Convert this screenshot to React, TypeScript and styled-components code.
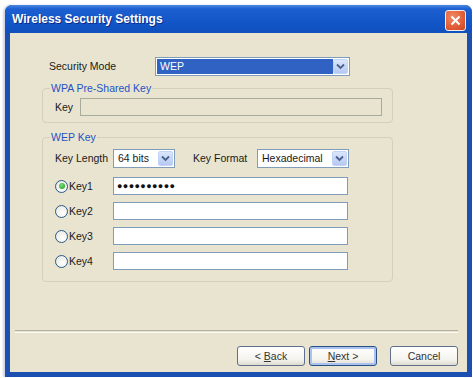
import styled, { createGlobalStyle } from 'styled-components';

const GlobalStyle = createGlobalStyle`
  body {
    margin: 0;
    background: #ffffff;
    font-family: 'Liberation Sans', Arial, sans-serif;
  }
`;

const Window = styled.div`
  margin: 5px 0 0 5px;
  width: 467px;
  height: 372px;
  display: flex;
  flex-direction: column;
  border-radius: 7px 7px 0 0;
  background: #1b4fb0;
  box-shadow: -2px 0 2px rgba(120, 130, 170, 0.35);
`;

const TitleBar = styled.div`
  height: 28px;
  display: flex;
  align-items: center;
  justify-content: space-between;
  padding: 0 6px 0 7px;
  border-radius: 7px 7px 0 0;
  background: linear-gradient(#4b87e4 0%, #1d5fd0 14%, #1256c8 60%, #1150bd 100%);
`;

const Title = styled.span`
  color: #ffffff;
  font-size: 12px;
  font-weight: bold;
  text-shadow: 1px 1px 0 #0b2a8a;
`;

const CloseButton = styled.div`
  width: 19px;
  height: 19px;
  margin-top: 2px;
  border: 1px solid #f4f0ee;
  border-radius: 3px;
  display: flex;
  align-items: center;
  justify-content: center;
  background: radial-gradient(circle at 35% 30%, #f08a66 0%, #e2603a 55%, #cc4522 100%);
`;

const Content = styled.div`
  flex: 1;
  margin: 0 5px 5px 5px;
  background: #e8e4cf;
  display: flex;
  flex-direction: column;
  font-size: 10.5px;
  color: #1a1a1a;
`;

const Body = styled.div`
  padding: 24px 0 0 32px;
  display: flex;
  flex-direction: column;
`;

const Row = styled.div<{ $indent?: number }>`
  display: flex;
  align-items: center;
  height: 18px;
  padding-left: ${({ $indent }) => $indent ?? 0}px;
`;

const Label = styled.span<{ $width?: number; $gap?: number }>`
  width: ${({ $width }) => ($width ? `${$width}px` : 'auto')};
  margin-left: ${({ $gap }) => $gap ?? 0}px;
  white-space: nowrap;
`;

const Group = styled.fieldset<{ $top: number; $pad: string }>`
  box-sizing: border-box;
  width: 351px;
  margin: ${({ $top }) => $top}px 0 0 0;
  padding: ${({ $pad }) => $pad};
  border: 1px solid #d3cfba;
  border-radius: 4px;
  display: flex;
  flex-direction: column;
  gap: 7px;
`;

const Legend = styled.legend`
  color: #2553c6;
  padding: 0 1px;
  margin-left: -5px;
  font-size: 10.5px;
`;

const TextBox = styled.div<{ $width: number; $disabled?: boolean }>`
  box-sizing: border-box;
  width: ${({ $width }) => $width}px;
  height: 18px;
  border: 1px solid ${({ $disabled }) => ($disabled ? '#a7ab9c' : '#7f9db9')};
  background: ${({ $disabled }) => ($disabled ? '#e8e4cf' : '#ffffff')};
  display: flex;
  align-items: center;
  padding-left: 3px;
  font-size: 9px;
  letter-spacing: 0.4px;
  color: #111;
`;

const SelectBox = styled.div<{ $width: number }>`
  box-sizing: border-box;
  width: ${({ $width }) => $width}px;
  height: 19px;
  border: 1px solid #7f9db9;
  background: #ffffff;
  display: flex;
  padding: 1px;
`;

const SelectValue = styled.span<{ $active?: boolean }>`
  flex: 1;
  display: flex;
  align-items: center;
  padding-left: 3px;
  background: ${({ $active }) => ($active ? '#2f62c2' : 'transparent')};
  color: ${({ $active }) => ($active ? '#ffffff' : '#1a1a1a')};
`;

const DropButton = styled.span`
  width: 15px;
  display: flex;
  align-items: center;
  justify-content: center;
  border-radius: 2px;
  background: linear-gradient(#dbe6fb, #b5c9f3);
  border: 1px solid #c3d3f6;
  box-sizing: border-box;
`;

const Radio = styled.span<{ $checked?: boolean }>`
  box-sizing: border-box;
  width: 13px;
  height: 13px;
  margin-right: 1px;
  border-radius: 50%;
  border: 1px solid #2a5b86;
  background: radial-gradient(circle at 60% 65%, #ffffff 0%, #e4e3dc 100%);
  display: flex;
  align-items: center;
  justify-content: center;

  &::after {
    content: '';
    display: ${({ $checked }) => ($checked ? 'block' : 'none')};
    width: 6px;
    height: 6px;
    border-radius: 50%;
    background: radial-gradient(circle at 40% 35%, #7be07b 0%, #2aa52a 80%);
  }
`;

const Footer = styled.div`
  margin-top: auto;
  display: flex;
  flex-direction: column;
`;

const Separator = styled.div`
  margin: 0 9px 0 5px;
  height: 1px;
  border-top: 1px solid #b4b09e;
  border-bottom: 1px solid #fbfaf4;
`;

const ButtonRow = styled.div`
  display: flex;
  justify-content: flex-end;
  gap: 4px;
  padding: 13px 9px 6px 0;
`;

const Button = styled.div<{ $focused?: boolean; $space?: number }>`
  box-sizing: border-box;
  width: 68px;
  height: 20px;
  margin-left: ${({ $space }) => $space ?? 0}px;
  border: 1px solid ${({ $focused }) => ($focused ? '#2b4f86' : '#5f708e')};
  border-radius: 3px;
  background: linear-gradient(#ffffff 0%, #f4f3ee 70%, #dedbcf 100%);
  box-shadow: ${({ $focused }) => ($focused ? 'inset 0 0 0 2px #a9c2ee' : 'none')};
  display: flex;
  align-items: center;
  justify-content: center;
  color: #333;
  font-size: 10.5px;
  white-space: pre;
`;

const Chevron = () => (
  <svg width="9" height="7" viewBox="0 0 9 7">
    <path d="M1 1.5 L4.5 5 L8 1.5" fill="none" stroke="#4a5f8c" strokeWidth="1.8" />
  </svg>
);

const Select = ({ value, width, active }: { value: string; width: number; active?: boolean }) => (
  <SelectBox $width={width}>
    <SelectValue $active={active}>{value}</SelectValue>
    <DropButton>
      <Chevron />
    </DropButton>
  </SelectBox>
);

const keys = [
  { name: 'Key1', value: '●●●●●●●●●●', checked: true },
  { name: 'Key2', value: '', checked: false },
  { name: 'Key3', value: '', checked: false },
  { name: 'Key4', value: '', checked: false },
];

export default function App() {
  return (
    <>
      <GlobalStyle />
      <Window>
        <TitleBar>
          <Title>Wireless Security Settings</Title>
          <CloseButton>
            <svg width="11" height="11" viewBox="0 0 11 11">
              <path d="M1.5 1.5 L9.5 9.5 M9.5 1.5 L1.5 9.5" stroke="#ffffff" strokeWidth="2" />
            </svg>
          </CloseButton>
        </TitleBar>
        <Content>
          <Body>
            <Row $indent={7}>
              <Label $width={106}>Security Mode</Label>
              <Select value="WEP" width={195} active />
            </Row>

            <Group $top={7} $pad="4px 10px 6px 12px">
              <Legend>WPA Pre-Shared Key</Legend>
              <Row>
                <Label $width={25}>Key</Label>
                <TextBox $width={302} $disabled />
              </Row>
            </Group>

            <Group $top={8} $pad="6px 10px 11px 12px">
              <Legend>WEP Key</Legend>
              <Row style={{ marginBottom: 3 }}>
                <Label $width={58}>Key Length</Label>
                <Select value="64 bits" width={62} />
                <Label $gap={18} $width={64}>
                  Key Format
                </Label>
                <Select value="Hexadecimal" width={92} />
              </Row>
              {keys.map((k) => (
                <Row key={k.name}>
                  <Radio $checked={k.checked} />
                  <Label $width={44}>{k.name}</Label>
                  <TextBox $width={235}>{k.value}</TextBox>
                </Row>
              ))}
            </Group>
          </Body>

          <Footer>
            <Separator />
            <ButtonRow>
              <Button>
                {'< '}
                <u>B</u>ack
              </Button>
              <Button $focused>
                <u>N</u>ext{' >'}
              </Button>
              <Button $space={9}>Cancel</Button>
            </ButtonRow>
          </Footer>
        </Content>
      </Window>
    </>
  );
}
